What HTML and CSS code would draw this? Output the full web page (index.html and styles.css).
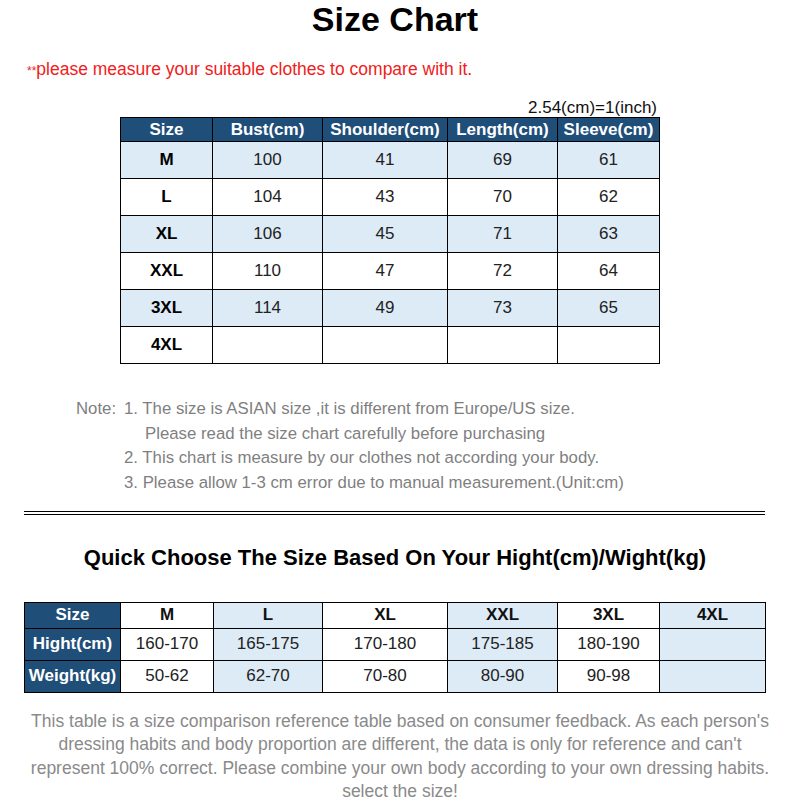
FILE: index.html
```html
<!DOCTYPE html>
<html>
<head>
<meta charset="utf-8">
<link rel="stylesheet" href="styles.css">
</head>
<body>
<div class="page">
  <h1 class="title">Size Chart</h1>
  <p class="warn"><span class="stars">**</span>please measure your suitable clothes to compare with it.</p>
  <div class="scale-wrap"><span class="scale">2.54(cm)=1(inch)</span></div>

  <table class="chart">
    <colgroup>
      <col style="width:92px"><col style="width:110px"><col style="width:125px"><col style="width:110px"><col style="width:102px">
    </colgroup>
    <thead>
      <tr><th>Size</th><th>Bust(cm)</th><th>Shoulder(cm)</th><th>Length(cm)</th><th>Sleeve(cm)</th></tr>
    </thead>
    <tbody>
      <tr class="blue"><td class="sz">M</td><td>100</td><td>41</td><td>69</td><td>61</td></tr>
      <tr><td class="sz">L</td><td>104</td><td>43</td><td>70</td><td>62</td></tr>
      <tr class="blue"><td class="sz">XL</td><td>106</td><td>45</td><td>71</td><td>63</td></tr>
      <tr><td class="sz">XXL</td><td>110</td><td>47</td><td>72</td><td>64</td></tr>
      <tr class="blue"><td class="sz">3XL</td><td>114</td><td>49</td><td>73</td><td>65</td></tr>
      <tr><td class="sz">4XL</td><td></td><td></td><td></td><td></td></tr>
    </tbody>
  </table>

  <div class="notes">
    <div class="note-label">Note:</div>
    <div class="note-list">
      <div>1. The size is ASIAN size ,it is different from Europe/US size.</div>
      <div class="indent">Please read the size chart carefully before purchasing</div>
      <div>2. This chart is measure by our clothes not according your body.</div>
      <div>3. Please allow 1-3 cm error due to manual measurement.(Unit:cm)</div>
    </div>
  </div>

  <div class="divider"></div>

  <h2 class="quick">Quick Choose The Size Based On Your Hight(cm)/Wight(kg)</h2>

  <table class="quick-table">
    <colgroup>
      <col style="width:96px"><col style="width:93px"><col style="width:109px"><col style="width:125px"><col style="width:110px"><col style="width:102px"><col style="width:106px">
    </colgroup>
    <tr class="head">
      <th class="lab">Size</th><td>M</td><td class="blue">L</td><td>XL</td><td class="blue">XXL</td><td>3XL</td><td class="blue">4XL</td>
    </tr>
    <tr class="data">
      <th class="lab">Hight(cm)</th><td>160-170</td><td class="blue">165-175</td><td>170-180</td><td class="blue">175-185</td><td>180-190</td><td class="blue"></td>
    </tr>
    <tr class="data">
      <th class="lab">Weight(kg)</th><td>50-62</td><td class="blue">62-70</td><td>70-80</td><td class="blue">80-90</td><td>90-98</td><td class="blue"></td>
    </tr>
  </table>

  <p class="foot">This table is a size comparison reference table based on consumer feedback. As each person's<br>dressing habits and body proportion are different, the data is only for reference and can't<br>represent 100% correct. Please combine your own body according to your own dressing habits.<br>select the size!</p>
</div>
</body>
</html>
```

FILE: styles.css
```css
html, body {
  margin: 0;
  padding: 0;
  background: #ffffff;
}
body {
  font-family: "Liberation Sans", Arial, sans-serif;
  color: #000;
}
.page {
  width: 800px;
}
.title {
  margin: 0;
  padding-right: 10px;
  font-size: 34px;
  line-height: 38px;
  font-weight: bold;
  text-align: center;
  color: #000;
}
.warn {
  margin: 21px 0 0 27px;
  font-size: 17.5px;
  line-height: 20px;
  color: #f02020;
}
.stars {
  font-size: 12px;
}
.scale-wrap {
  margin-top: 18px;
  width: 657px;
  text-align: right;
  line-height: 18px;
  height: 18px;
}
.scale {
  font-size: 17px;
  color: #111;
}
table {
  border-collapse: collapse;
  table-layout: fixed;
}
.chart {
  margin: 0 0 0 120px;
  width: 539px;
}
.chart th, .chart td {
  border: 1.5px solid #000;
  text-align: center;
  padding: 0;
}
.chart th {
  background: #1f4e79;
  color: #fff;
  font-size: 17px;
  font-weight: bold;
  height: 23px;
}
.chart td {
  height: 36px;
  font-size: 17px;
  color: #222;
}
.chart tr.blue td {
  background: #ddebf7;
}
.chart td.sz {
  font-weight: bold;
  color: #000;
}
.notes {
  display: flex;
  margin: 33px 0 0 76px;
  font-size: 16.8px;
  line-height: 24.7px;
  color: #7f7f7f;
}
.note-label {
  width: 48px;
}
.note-list .indent {
  padding-left: 21px;
}
.divider {
  margin: 15px 0 0 24px;
  width: 741px;
  height: 0;
  border-top: 4px double #000;
}
.quick {
  margin: 30px 0 0 0;
  padding-right: 10px;
  text-align: center;
  font-size: 22px;
  line-height: 26px;
  font-weight: bold;
}
.quick-table {
  margin: 31px 0 0 24px;
  width: 741px;
}
.quick-table th, .quick-table td {
  border: 1.5px solid #000;
  padding: 0;
  text-align: center;
  font-size: 17px;
}
.quick-table .head th, .quick-table .head td {
  height: 25px;
}
.quick-table .data th, .quick-table .data td {
  height: 31px;
}
.quick-table th.lab {
  background: #1f4e79;
  color: #fff;
  font-weight: bold;
}
.quick-table .head td {
  font-weight: bold;
  color: #111;
}
.quick-table .data td {
  color: #222;
}
.quick-table td.blue {
  background: #ddebf7;
}
.foot {
  margin: 17px 0 0 0;
  padding: 0 10px;
  text-align: center;
  font-size: 17.5px;
  line-height: 23.5px;
  color: #8a8a8a;
  white-space: nowrap;
}
```
